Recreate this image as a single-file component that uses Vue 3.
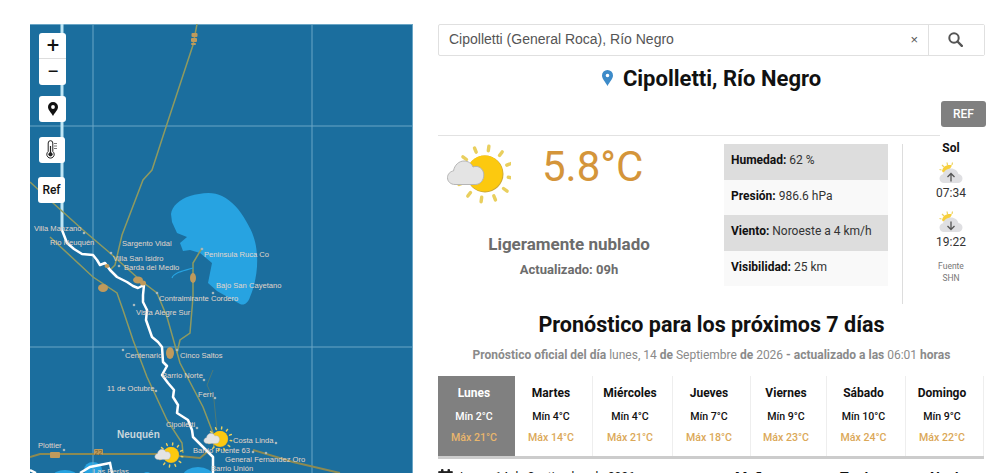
<template>
  <div class="page">
    <svg class="defs" width="0" height="0" aria-hidden="true">
      <symbol id="partly" viewBox="0 0 64 60">
        <line
          v-for="r in rays"
          :key="r.a"
          :x1="r.x1"
          :y1="r.y1"
          :x2="r.x2"
          :y2="r.y2"
          stroke="#e9cf5e"
          stroke-width="3.4"
          stroke-linecap="round"
        />
        <circle cx="38" cy="30" r="18.5" fill="#c9a63a" />
        <circle cx="37.6" cy="29.5" r="18" fill="#fcc90f" />
        <path
          d="M8 40.500c-4.400 0-7.500-3-7.500-6.800 0-3.500 2.600-6.300 6-6.800C7.500 21 12 17 17 17c4.200 0 7.500 2.400 9 6 .9-.4 1.900-.6 3-.6 4.300 0 7.800 3.700 7.800 8.500 0 5.300-3.500 9.600-8.500 9.600z"
          fill="#e4e4e4"
          stroke="#b5b5b5"
          stroke-width="1"
        />
      </symbol>
      <symbol id="sunUp" viewBox="0 0 24 22">
        <path d="M3 9C4 4.500 8 2 13 3.500l-3 5-6 2z" fill="#f7cf3a" />
        <path d="M3 3l2 2M8 .5l.5 2.500M13.500 .5L13 3M.5 7.500l2 .5" stroke="#ecd25f" stroke-width="1.200" />
        <path
          d="M5 21c-2.600 0-4.500-1.900-4.500-4.500 0-2.200 1.500-3.800 3.500-4.200C5 8.800 8 6.500 12 6.500c3.800 0 6.600 2.300 7.400 5.500 2.400.3 4.100 2.200 4.100 4.500 0 2.600-1.900 4.500-4.700 4.500z"
          fill="#dfdfe2"
        />
      </symbol>
    </svg>

    <div class="mapBox">
      <svg class="mapSvg" viewBox="30 24 383 520" aria-hidden="true">
        <path
          d="M171 214C172 206 180 199 190 196 200 193 213 191 222 196 232 201 240 210 246 221 252 231 256 240 257 255 258 270 255 285 250 297 248 303 244 306 240 304L217 291 208 283 210 273 212 263 200 253 190 250 183 251 180 243 187 237 177 233 172 222Z"
          fill="#27a3e1"
        />
        <g fill="#27a3e1">
          <ellipse cx="65" cy="476" rx="12" ry="6" />
          <ellipse cx="93" cy="470" rx="9" ry="8" />
          <ellipse cx="147" cy="476" rx="4" ry="4" />
          <ellipse cx="198" cy="476" rx="15" ry="9" />
        </g>
        <g fill="none" stroke="#6aa6c6" stroke-width="1">
          <path d="M93 24V473M312 24V473M412.500 24V473M30 126H413M30 347H413M30 24.500H413" />
        </g>
        <path d="M62 24V230" stroke="#bfe6f5" stroke-width="3" fill="none" />
        <g fill="none" stroke="#8f9a60" stroke-width="1.500">
          <path d="M197 24L193 45 165 130 152 170 143 180 122 235 115 265 110 270" />
          <path d="M30 182L53 203 83 230 110 253 140 280 157 293 167 317 180 363 203 407 213 433 214 448" />
          <path d="M50 237L93 277 117 293 123 310 133 340 147 377 167 420 182 443 183 453" />
          <path d="M30 457L40 454H157L200 458 207 452" stroke="#8c8a52" stroke-width="2" />
          <path d="M253 450L293 462 340 473" stroke="#8c8a52" stroke-width="2" />
          <path d="M202 248L193 263V297L190 333 180 340 177 353" />
          <path d="M213 370L207 385 214 400 217 430" stroke="#4e7a76" stroke-width="1" />
          <path d="M172 278C174 272 184 271 193 268" stroke="#27a3e1" stroke-width="1.200" />
        </g>
        <path
          d="M62 230L67 243 74 249 82 254 93 255 97 260 100 265 105 263 110 270 117 277 127 282 133 286 138 288 144 285 143 295 143 302 147 310 146 320 152 337 158 342 162 347 163 362 167 366 162 375 168 383 174 390 173 397 178 405 177 413 188 420 192 430 193 437 203 447 213 457V473"
          fill="none"
          stroke="#fff"
          stroke-width="2.500"
          stroke-linejoin="round"
        />
        <path d="M30 470L36 473M80 473L90 467 110 463 112 473" fill="none" stroke="#fff" stroke-width="2.500" />
        <g fill="#bf9a5c">
          <rect x="191.500" y="33" width="6" height="4" rx="1" />
          <rect x="191" y="38" width="6" height="4" rx="1" />
          <rect x="191" y="43" width="5" height="2" rx="1" />
          <ellipse cx="103" cy="288" rx="5" ry="4" />
          <ellipse cx="138" cy="280" rx="5" ry="3.500" />
          <ellipse cx="143" cy="283" rx="3" ry="2.500" />
          <ellipse cx="107" cy="266" rx="2.500" ry="2" />
          <ellipse cx="193" cy="278" rx="3" ry="5" />
          <ellipse cx="170" cy="353" rx="4" ry="6" />
          <rect x="50" y="452" width="10" height="6" rx="1" />
          <rect x="94" y="449" width="9" height="6" rx="1" />
        </g>
        <g fill="#a7b8bd">
          <circle v-for="d in dots" :key="d[0] + '-' + d[1]" :cx="d[0]" :cy="d[1]" r="1.300" />
        </g>
        <g class="labels">
          <text v-for="l in labels" :key="l.t" :x="l.x" :y="l.y">{{ l.t }}</text>
          <text class="prov" x="117" y="438">Neuquén</text>
          <text class="shield" x="94.500" y="455">22</text>
        </g>
        <use href="#partly" x="202.500" y="426" width="30" height="26" />
        <use href="#partly" x="153.500" y="442" width="30" height="26" />
      </svg>

      <div class="ctrls">
        <div class="zoomCtl">
          <button class="zoomBtn">+</button>
          <button class="zoomBtn">−</button>
        </div>
        <button class="ctl">
          <svg width="10" height="14" viewBox="0 0 10 14">
            <path d="M5 0a5 5 0 0 0-5 5c0 3 3.200 5.500 5 9 1.800-3.500 5-6 5-9a5 5 0 0 0-5-5zm0 3.100a1.900 1.900 0 1 1 0 3.800 1.900 1.900 0 0 1 0-3.800z" fill="#111" fill-rule="evenodd" />
          </svg>
        </button>
        <button class="ctl thermo">
          <svg width="12" height="20" viewBox="0 0 12 20">
            <path d="M2.200 11.500V3a2.300 2.300 0 0 1 4.600 0v8.500a3.700 3.700 0 1 1-4.600 0z" fill="none" stroke="#222" stroke-width="1" />
            <circle cx="4.500" cy="14.300" r="2.100" fill="#222" />
            <path d="M4.500 14V6" stroke="#222" stroke-width="1.200" />
            <path d="M8 3.500h3M8 6h3M8 8.500h3" stroke="#555" stroke-width=".8" />
          </svg>
        </button>
        <button class="ctl refBtn">Ref</button>
      </div>
    </div>

    <div class="side">
      <div class="search">
        <div class="field">
          <span>Cipolletti (General Roca), Río Negro</span>
          <span class="clear">×</span>
        </div>
        <button class="go">
          <svg width="15" height="15" viewBox="0 0 15 15">
            <circle cx="6" cy="6" r="4.700" fill="none" stroke="#555" stroke-width="2" />
            <path d="M9.500 9.500L13.800 13.800" stroke="#555" stroke-width="2.400" stroke-linecap="round" />
          </svg>
        </button>
      </div>

      <h1 class="city">
        <svg width="11" height="16" viewBox="0 0 11 16">
          <path d="M5.500 0A5.500 5.500 0 0 0 0 5.500c0 3.500 3.500 6.500 5.500 10.500 2-4 5.500-7 5.500-10.500A5.500 5.500 0 0 0 5.500 0zm0 3.700a1.800 1.800 0 1 1 0 3.600 1.800 1.800 0 0 1 0-3.600z" fill="#3d8bc9" fill-rule="evenodd" />
        </svg>
        Cipolletti, Río Negro
      </h1>

      <div class="refRow"><button class="refTag">REF</button></div>
      <div class="rule"></div>

      <div class="now">
        <div class="current">
          <div class="tempRow">
            <svg class="bigIcon" width="64" height="60"><use href="#partly" width="64" height="60" /></svg>
            <span class="temp">5.8°C</span>
          </div>
          <div class="sky">Ligeramente nublado</div>
          <div class="updated">Actualizado: 09h</div>
        </div>

        <div class="stats">
          <div v-for="s in stats" :key="s.k" class="stat"><b>{{ s.k }}:</b> {{ s.v }}</div>
        </div>

        <div class="sun">
          <div class="sunTitle">Sol</div>
          <div class="sunIcon">
            <svg width="24" height="22"><use href="#sunUp" width="24" height="22" /></svg>
            <svg class="arrow" width="10" height="10" viewBox="0 0 10 10"><path d="M5 9.500V1.500M1.500 5L5 1.500 8.500 5" fill="none" stroke="#555" stroke-width="1.300" /></svg>
          </div>
          <div class="sunTime">07:34</div>
          <div class="sunIcon second">
            <svg width="24" height="22"><use href="#sunUp" width="24" height="22" /></svg>
            <svg class="arrow" width="10" height="10" viewBox="0 0 10 10"><path d="M5 .5V8.500M1.500 5L5 8.500 8.500 5" fill="none" stroke="#555" stroke-width="1.300" /></svg>
          </div>
          <div class="sunTime">19:22</div>
          <div class="source">Fuente<br />SHN</div>
        </div>
      </div>

      <h2 class="heading">Pronóstico para los próximos 7 días</h2>
      <p class="official">
        <b>Pronóstico oficial del día</b> lunes, 14 <b>de</b> Septiembre <b>de</b> 2026 <b>- actualizado a las</b> 06:01 <b>horas</b>
      </p>

      <div class="tabs">
        <div v-for="(d, i) in days" :key="d.n" class="tab" :class="{ active: i === 0 }">
          <div class="dayName">{{ d.n }}</div>
          <div class="min">Mín {{ d.min }}°C</div>
          <div class="max">Máx {{ d.max }}°C</div>
        </div>
      </div>

      <div class="detailHead">
        <div class="dateCell">
          <svg width="15" height="14" viewBox="0 0 15 14">
            <path d="M1 3h13v10H1z" fill="none" stroke="#222" stroke-width="1.500" />
            <path d="M1 2.500h13V6H1z" fill="#222" />
            <rect x="3" y="0" width="2.500" height="4" rx="1" fill="#222" />
            <rect x="9.500" y="0" width="2.500" height="4" rx="1" fill="#222" />
          </svg>
          <span>Lunes 14 de Septiembre de 2026</span>
        </div>
        <b class="part morning">Mañana</b>
        <b class="part afternoon">Tarde</b>
        <b class="part night">Noche</b>
      </div>
    </div>
  </div>
</template>

<script setup>
const rays = Array.from({ length: 12 }, (_, i) => {
  const a = ((i * 30 + 8) * Math.PI) / 180
  return {
    a: i,
    x1: +(38 + Math.cos(a) * 23.5).toFixed(1),
    y1: +(30 + Math.sin(a) * 23.5).toFixed(1),
    x2: +(38 + Math.cos(a) * 28).toFixed(1),
    y2: +(30 + Math.sin(a) * 28).toFixed(1),
  }
})

const labels = [
  { t: 'Villa Manzano', x: 34, y: 231 },
  { t: 'Rio Neuquén', x: 50, y: 245 },
  { t: 'Sargento Vidal', x: 122, y: 246 },
  { t: 'Villa San Isidro', x: 113, y: 261 },
  { t: 'Barda del Medio', x: 124, y: 270 },
  { t: 'Peninsula Ruca Co', x: 204, y: 257 },
  { t: 'Bajo San Cayetano', x: 216, y: 288 },
  { t: 'Contralmirante Cordero', x: 159, y: 301 },
  { t: 'Vista Alegre Sur', x: 136, y: 315 },
  { t: 'Centenario', x: 125, y: 358 },
  { t: 'Cinco Saltos', x: 180, y: 358 },
  { t: 'Barrio Norte', x: 162, y: 378 },
  { t: 'Ferri', x: 198, y: 397 },
  { t: '11 de Octubre', x: 107, y: 391 },
  { t: 'Cipolletti', x: 166, y: 427 },
  { t: 'Costa Linda', x: 233, y: 443 },
  { t: 'Barrio Puente 63', x: 193, y: 453 },
  { t: 'General Fernandez Oro', x: 225, y: 462 },
  { t: 'Barrio Unión', x: 211, y: 471 },
  { t: 'Plottier', x: 38, y: 448 },
  { t: 'Las Perlas', x: 93, y: 474 },
]

const dots = [
  [84, 233], [111, 253], [119, 266], [202, 249], [213, 293], [157, 293],
  [134, 305], [123, 350], [177, 350], [204, 380], [215, 398], [156, 391],
  [197, 428], [276, 443], [253, 452], [266, 453], [64, 450],
]

const stats = [
  { k: 'Humedad', v: '62 %' },
  { k: 'Presión', v: '986.6 hPa' },
  { k: 'Viento', v: 'Noroeste a 4 km/h' },
  { k: 'Visibilidad', v: '25 km' },
]

const days = [
  { n: 'Lunes', min: 2, max: 21 },
  { n: 'Martes', min: 4, max: 14 },
  { n: 'Miércoles', min: 4, max: 21 },
  { n: 'Jueves', min: 7, max: 18 },
  { n: 'Viernes', min: 9, max: 23 },
  { n: 'Sábado', min: 10, max: 24 },
  { n: 'Domingo', min: 9, max: 22 },
]
</script>

<style>
html,
body {
  margin: 0;
  background: #fff;
  overflow: hidden;
}
</style>

<style scoped>
.page {
  height: 473px;
  box-sizing: border-box;
  padding: 24px 0 0 30px;
  display: flex;
  gap: 25px;
  overflow: hidden;
  font-family: Roboto, 'Liberation Sans', sans-serif;
  color: #111;
}
.defs {
  position: absolute;
}
.mapBox {
  flex: none;
  width: 383px;
  height: 520px;
  position: relative;
  background: #1b6e9e;
}
.mapSvg {
  display: block;
  width: 383px;
  height: 520px;
}
.labels text {
  font-family: 'Liberation Sans', Arial, sans-serif;
  font-size: 7.6px;
  fill: #e2d6ca;
}
.labels .prov {
  font-size: 10px;
  font-weight: 700;
  fill: #c9d6dc;
}
.labels .shield {
  font-size: 7px;
  fill: #6b5a2c;
}
.ctrls {
  position: absolute;
  left: 9px;
  top: 9px;
  display: flex;
  flex-direction: column;
  align-items: flex-start;
}
.zoomCtl {
  width: 27px;
  background: #fff;
  border-radius: 3px;
  display: flex;
  flex-direction: column;
}
.zoomBtn {
  height: 26px;
  padding: 0 0 0 1px;
  border: 0;
  background: none;
  font: 400 22px/26px Roboto, sans-serif;
  color: #111;
}
.zoomBtn:first-child {
  border-bottom: 1px solid #ddd;
}
.ctl {
  width: 27px;
  height: 26px;
  margin-top: 11px;
  padding: 0;
  border: 0;
  border-radius: 3px;
  background: #fff;
  display: flex;
  align-items: center;
  justify-content: center;
}
.thermo {
  margin-top: 15px;
  width: 26px;
}
.refBtn {
  margin-top: 14px;
  margin-left: -1px;
  font: 500 12px Roboto, sans-serif;
  color: #111;
}
.side {
  flex: none;
  width: 547px;
}
.search {
  display: flex;
  height: 32px;
  box-sizing: border-box;
  border: 1px solid #e0e0e0;
  border-radius: 2px;
}
.field {
  flex: 1;
  display: flex;
  align-items: center;
  justify-content: space-between;
  padding: 0 10px 2px;
  font: 14px 'Liberation Sans', Arial, sans-serif;
  color: #555;
}
.clear {
  font-size: 13px;
}
.go {
  width: 56px;
  border: 0;
  border-left: 1px solid #e0e0e0;
  background: #fff;
  padding: 0 2px 2px 0;
  display: flex;
  align-items: center;
  justify-content: center;
}
.city {
  margin: 11px 0 0;
  height: 24px;
  display: flex;
  align-items: center;
  justify-content: center;
  gap: 10px;
  font-size: 22px;
  line-height: 24px;
  font-weight: 700;
}
.city svg {
  margin-top: -3px;
}
.refRow {
  display: flex;
  justify-content: flex-end;
  width: 548px;
  margin-top: 10px;
}
.refTag {
  width: 45px;
  height: 26px;
  padding: 0;
  border: 0;
  border-radius: 3px;
  background: #808080;
  color: #fff;
  font: 500 12px Roboto, sans-serif;
}
.rule {
  margin-top: 8px;
  width: 502px;
  height: 1px;
  background: #e2e2e2;
}
.now {
  display: flex;
  margin-top: 8px;
  height: 160px;
}
.current {
  flex: none;
  width: 262px;
  text-align: center;
}
.tempRow {
  display: flex;
  height: 77px;
}
.bigIcon {
  margin-left: 9px;
}
.temp {
  margin-left: 31px;
  font-size: 42px;
  line-height: 46px;
  color: #d4953a;
}
.sky {
  margin-top: 13px;
  font-size: 17px;
  line-height: 20px;
  font-weight: 700;
  color: #6c6c6c;
}
.updated {
  margin-top: 8px;
  font-size: 13px;
  line-height: 16px;
  font-weight: 700;
  color: #6c6c6c;
}
.stats {
  margin-left: 24px;
  width: 164px;
  flex: none;
  align-self: flex-start;
}
.stat {
  height: 35.500px;
  line-height: 32px;
  padding-left: 7px;
  font-size: 12px;
  color: #333;
  background: #f9f9f9;
}
.stat:nth-child(odd) {
  background: #ddd;
}
.stat b {
  color: #111;
}
.sun {
  flex: none;
  margin-left: 14px;
  width: 96px;
  border-left: 1px solid #ddd;
  text-align: center;
  font-size: 12px;
  color: #333;
}
.sunTitle {
  margin-top: -3px;
  font-weight: 700;
  line-height: 14px;
  color: #111;
}
.sunIcon {
  position: relative;
  width: 24px;
  height: 22px;
  margin: 7px auto 0;
}
.sunIcon.second {
  margin-top: 10px;
}
.arrow {
  position: absolute;
  left: 7px;
  top: 10px;
}
.sunTime {
  margin-top: 1px;
  line-height: 16px;
}
.source {
  margin-top: 10px;
  font-size: 8.500px;
  line-height: 12px;
  color: #777;
}
.heading {
  margin: 8px 0 0;
  text-align: center;
  font-size: 21.500px;
  line-height: 26px;
  font-weight: 700;
}
.official {
  margin: 9px 0 0;
  text-align: center;
  font-size: 12px;
  line-height: 16px;
  color: #8a8a8a;
}
.tabs {
  margin-top: 13px;
  width: 546px;
  display: grid;
  grid-template-columns: 77px 78px 80px 78px 76px 79px 78px;
  border-bottom: 3px solid #ccc;
}
.tab {
  height: 80px;
  box-sizing: border-box;
  padding: 9px 5px 0 0;
  text-align: center;
  border-right: 1px solid #eee;
  font-size: 10.600px;
  font-weight: 500;
}
.tab.active {
  background: #808080;
  color: #fff;
  border-right: 0;
}
.dayName {
  font-size: 12px;
  line-height: 16px;
  font-weight: 700;
}
.min {
  margin-top: 9px;
  line-height: 14px;
}
.max {
  margin-top: 7px;
  line-height: 14px;
  color: #dba858;
}
.active .max {
  color: #e9b66c;
}
.detailHead {
  margin-top: 10px;
  display: flex;
  align-items: flex-start;
  font-size: 12px;
}
.dateCell {
  width: 297px;
  display: flex;
  align-items: flex-start;
  gap: 7px;
  line-height: 16px;
}
.part {
  font-size: 14px;
  line-height: 16px;
  margin-top: 1px;
}
.morning {
  width: 105px;
}
.afternoon {
  width: 90px;
}
</style>
